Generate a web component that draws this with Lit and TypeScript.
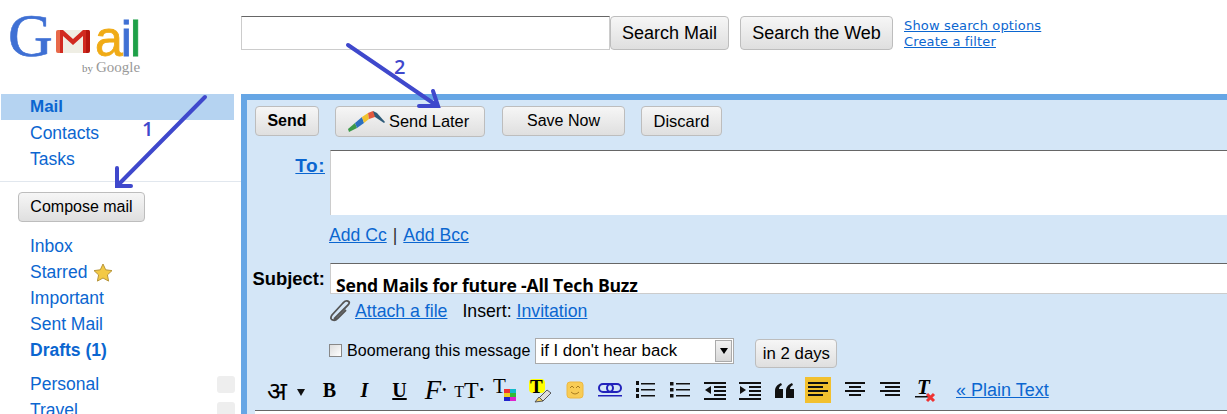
import { LitElement, html, css, svg } from "lit";
import { customElement } from "lit/decorators.js";

@customElement("app-root")
export class AppRoot extends LitElement {
  static styles = css`
    :host { display: block; position: relative; width: 1227px; height: 414px; overflow: hidden; background: #fff; font: 16px "Liberation Sans", Arial, sans-serif; color: #000; }
    a { color: #0b66d0; }
    .top { display: flex; height: 94px; }
    .logo-col { width: 241px; flex: none; padding: 0 0 0 8px; box-sizing: border-box; }
    .logo { display: flex; align-items: baseline; height: 60px; }
    .g { font: 62px/71px "Liberation Serif", serif; color: #3f70d4; width: 47px; -webkit-text-stroke: 0.6px #3f70d4; }
    .envelope { width: 36px; height: 25px; align-self: flex-start; margin: 29px 4px 0 0; flex: none; }
    .ail { font: 50px/57px "Liberation Sans", sans-serif; letter-spacing: -2px; -webkit-text-stroke: 0.8px; }
    .c-a { color: #f0ab16; } .c-i { color: #3f70d4; } .c-l { color: #1ea048; }
    .by { margin: 0 0 0 74px; font: 11px/14px "Liberation Serif", serif; color: #888; display: flex; align-items: baseline; gap: 3px; }
    .by b { font: 15px/14px "Liberation Serif", serif; color: #999; }
    .search { display: flex; align-items: flex-start; padding-top: 16px; }
    .search-input { width: 369px; height: 34px; box-sizing: border-box; border: 1px solid #ccc; border-top-color: #666; background: #fff; }
    .btn { display: flex; align-items: center; justify-content: center; box-sizing: border-box; border: 1px solid #bdbdbd; border-radius: 4px; background: linear-gradient(#f6f6f6, #dfdfdf); font-size: 16px; color: #000; flex: none; white-space: nowrap; }
    .s-mail { width: 119px; height: 34px; font-size: 18px; }
    .s-web { width: 153px; height: 34px; margin-left: 11px; font-size: 18px; }
    .s-links { margin-left: 11px; font: 13px/16px "DejaVu Sans", sans-serif; letter-spacing: 0.15px; display: flex; flex-direction: column; align-items: flex-start; padding-top: 2px; }
    .body { display: flex; }
    .side { width: 241px; flex: none; }
    .nav { display: block; line-height: 26px; height: 26px; padding-left: 30px; color: #0b66d0; font-size: 17.5px; }
    .nav.on { margin: 0 7px 0 1px; padding-left: 29px; background: #b5d3f1; font-weight: bold; font-size: 17px; }
    .nav.bold { font-weight: bold; }
    .rule { height: 1px; background: #e1e7ee; margin-top: 9px; }
    .compose { width: 127px; height: 30px; margin: 10px 0 11px 18px; }
    .gap { height: 8px; }
    .star { width: 20px; height: 20px; margin-left: 6px; vertical-align: -5px; }
    .lab { display: flex; justify-content: space-between; align-items: center; padding-right: 6px; }
    .sw { width: 18px; height: 17px; background: #eee; border-radius: 3px; }
    .main { flex: 1; height: 320px; box-sizing: border-box; border-top: 6px solid #66a6e5; border-left: 6px solid #66a6e5; background: #d4e6f7; overflow: hidden; }
    .actions { display: flex; align-items: flex-start; padding: 6px 0 0 8px; }
    .a-send { width: 64px; height: 30px; font-weight: bold; }
    .a-later { width: 150px; height: 31px; margin-left: 16px; gap: 4px; justify-content: flex-start; padding: 0 0 1px 11px; font-size: 16.4px; }
    .a-later svg { width: 38px; height: 22px; }
    .a-save { width: 123px; height: 30px; margin-left: 17px; }
    .a-disc { width: 81px; height: 30px; margin-left: 16px; font-size: 16.5px; }
    .row { display: flex; gap: 5px; }
    .label { width: 78px; flex: none; text-align: right; font-weight: bold; line-height: 20px; white-space: nowrap; }
    .to-row { margin-top: 13px; }
    .to-row .label { padding-top: 6px; font-size: 19px; letter-spacing: 0.5px; }
    .to-input { flex: 1; height: 65px; box-sizing: border-box; background: #fff; border-top: 1px solid #666; border-left: 1px solid #ccc; }
    .cc { display: flex; gap: 6px; margin: 10px 0 0 82px; line-height: 20px; color: #333; font-size: 17.6px; }
    .sub-row { margin-top: 18px; }
    .sub-row .label { padding-top: 6px; color: #000; font-size: 18.4px; display: flex; justify-content: flex-end; }
    .sub-input { flex: 1; height: 31px; box-sizing: border-box; background: #fff; border-top: 1px solid #666; border-left: 1px solid #ccc; border-bottom: 1px solid #ccc; padding: 6px 0 0 5px; font: bold 17.6px/30px "Open Sans", sans-serif; letter-spacing: -0.2px; overflow: hidden; white-space: nowrap; }
    .attach { display: flex; align-items: center; margin: 7px 0 0 82px; height: 20px; font-size: 17.7px; }
    .clip { width: 22px; height: 22px; margin-right: 4px; flex: none; }
    .ins { margin-left: 15px; margin-right: 5px; }
    .boom { display: flex; align-items: flex-start; margin: 17px 0 0 82px; height: 30px; }
    .check { width: 13px; height: 13px; box-sizing: border-box; border: 1px solid #888; background: linear-gradient(135deg, #ddd, #fff); margin: 6px 5px 0 0; flex: none; }
    .boom-t { line-height: 26px; white-space: nowrap; letter-spacing: 0.09px; }
    .select { width: 199px; height: 26px; box-sizing: border-box; margin-left: 5px; border: 1px solid #aaa; background: #fff; display: flex; align-items: center; justify-content: space-between; padding: 0 0 0 4px; flex: none; font-size: 16.8px; }
    .drop { width: 17px; height: 22px; margin-right: 1px; background: linear-gradient(#f2f2f2, #d8d8d8); border: 1px solid #aaa; box-sizing: border-box; display: flex; align-items: center; justify-content: center; }
    .drop i { border: 4px solid transparent; border-top: 6px solid #000; border-bottom: 0; }
    .days { width: 82px; height: 29px; margin: 1px 0 0 21px; font-size: 16.8px; }
    .tools { display: flex; align-items: center; height: 28px; margin: 8px 0 0 13px; }
    .t { width: 35px; height: 26px; flex: none; display: flex; align-items: center; justify-content: center; font-family: "Liberation Serif", serif; font-size: 20px; line-height: 26px; }
    .t svg { width: 26px; height: 26px; flex: none; }
    .t.h { width: 30px; font: 26px/26px "Noto Sans", "DejaVu Sans", sans-serif; justify-content: center; padding-left: 4px; box-sizing: border-box; }
    .t.d { width: 22px; }
    .t.d i { border: 4px solid transparent; border-top: 7px solid #111; border-bottom: 0; margin-top: 4px; }
    .t.f { font-size: 27px; padding-left: 3px; box-sizing: border-box; }
    .t.tt { font-size: 24px; }
    .t.tt small { font-size: 16px; line-height: 26px; margin-top: 4px; }
    .dot { font-size: 18px; font-weight: bold; }
    .t.on { background: #f2c02f; width: 26px; margin: 0 6px 0 3px; }
    .plain { margin-left: 14px; white-space: nowrap; font-size: 18px; }
    .edit { height: 20px; margin: 6px 0 0 8px; background: #fff; border-top: 1px solid #666; }
    .overlay { position: absolute; inset: 0; width: 1227px; height: 414px; pointer-events: none; }
    .overlay text { font: 600 20px "Open Sans", sans-serif; fill: #3f48cc; }
  `;

  private tool(content: unknown, cls = "") {
    return html`<span class="t ${cls}">${content}</span>`;
  }

  private ic(body: unknown) {
    return html`<svg viewBox="0 0 26 26">${body}</svg>`;
  }

  private lines(rows: [number, number][]) {
    return rows.map(([a, b], i) => svg`<rect x=${a} y=${5 + i * 4} width=${b - a} height="2" fill="#111"/>`);
  }

  render() {
    const envelope = html`<svg class="envelope" viewBox="0 0 36 25">
      <rect x="1" y="1" width="34" height="23" rx="2" fill="#efeee4"/>
      <path d="M5 1h3l10 9L28 1h3v23h-3V7l-10 9L8 7v17H5z" fill="#d12a20"/>
      <path d="M1 3a2 2 0 0 1 2-2h2v23H3a2 2 0 0 1-2-2z" fill="#e8694a"/>
      <path d="M31 1h3a2 2 0 0 1 1 2v19a2 2 0 0 1-2 2h-2z" fill="#b5160f"/>
    </svg>`;
    const star = html`<svg class="star" viewBox="0 0 20 20"><path d="M10 1l2.700 5.800 6.300.8-4.600 4.300 1.200 6.200L10 15l-5.600 3.100 1.200-6.200L1 7.600l6.300-.8z" fill="#f3c945" stroke="#b8963a"/></svg>`;
    return html`
      <div class="top">
        <div class="logo-col">
          <div class="logo"><span class="g">G</span>${envelope}<span class="ail"><span class="c-a">a</span><span class="c-i">i</span><span class="c-l">l</span></span></div>
          <div class="by">by <b>Google</b></div>
        </div>
        <div class="search">
          <div class="search-input"></div>
          <div class="btn s-mail">Search Mail</div>
          <div class="btn s-web">Search the Web</div>
          <div class="s-links"><a href="#">Show search options</a><a href="#">Create a filter</a></div>
        </div>
      </div>
      <div class="body">
        <div class="side">
          <div class="nav on">Mail</div>
          <div class="nav">Contacts</div>
          <div class="nav">Tasks</div>
          <div class="rule"></div>
          <div class="btn compose">Compose mail</div>
          <div class="nav">Inbox</div>
          <div class="nav">Starred${star}</div>
          <div class="nav">Important</div>
          <div class="nav">Sent Mail</div>
          <div class="nav bold">Drafts (1)</div>
          <div class="gap"></div>
          <div class="nav lab">Personal<span class="sw"></span></div>
          <div class="nav lab">Travel<span class="sw"></span></div>
        </div>
        <div class="main">
          <div class="actions">
            <div class="btn a-send">Send</div>
            <div class="btn a-later">
              <svg viewBox="0 0 38 22">
                <path d="M1 19L8 13 10 18 2 22z" fill="#3c9a4a"/>
                <path d="M8 13L15 7 17 13 10 18z" fill="#2c6fc0"/>
                <path d="M15 7L21 3 22 9 17 13z" fill="#f0c22e"/>
                <path d="M21 3L26 1 30 5 28 7 22 9z" fill="#e2583e"/>
                <path d="M26 1L30 3 38 12 37 13 28 7z" fill="#2d5a78"/>
              </svg>
              Send Later
            </div>
            <div class="btn a-save">Save Now</div>
            <div class="btn a-disc">Discard</div>
          </div>
          <div class="row to-row"><div class="label"><a href="#">To:</a></div><div class="to-input"></div></div>
          <div class="cc"><a href="#">Add Cc</a><span>|</span><a href="#">Add Bcc</a></div>
          <div class="row sub-row"><div class="label">Subject:</div><div class="sub-input">Send Mails for future -All Tech Buzz</div></div>
          <div class="attach">
            <svg class="clip" viewBox="0 0 22 22" fill="none" stroke="#555" stroke-width="1.800"><path d="M5 19L17 7C19 5 21 3 20 2 18 0 16 1 14 3L3 15C1 18 2 20 4 20 6 21 8 19 9 18L17 10"/></svg>
            <a href="#">Attach a file</a><span class="ins">Insert:</span><a href="#">Invitation</a>
          </div>
          <div class="boom">
            <span class="check"></span><span class="boom-t">Boomerang this message</span>
            <div class="select">if I don't hear back<span class="drop"><i></i></span></div>
            <div class="btn days">in 2 days</div>
          </div>
          <div class="tools">
            ${this.tool("अ", "h")}
            ${this.tool(html`<i></i>`, "d")}
            ${this.tool(html`<b>B</b>`)}
            ${this.tool(html`<b><i>I</i></b>`)}
            ${this.tool(html`<b><u>U</u></b>`)}
            ${this.tool(html`<i>F</i><span class="dot">·</span>`, "f")}
            ${this.tool(html`<small>T</small>T<span class="dot">·</span>`, "tt")}
            ${this.tool(this.ic(svg`<text x="1" y="16" font-family="Liberation Serif" font-size="21">T</text>
              <rect x="12" y="12" width="6" height="4" fill="#e33"/><rect x="18" y="12" width="6" height="4" fill="#1bc"/>
              <rect x="12" y="16" width="6" height="4" fill="#ec2"/><rect x="18" y="16" width="6" height="4" fill="#3b3"/>
              <rect x="12" y="20" width="6" height="4" fill="#22c"/><rect x="18" y="20" width="6" height="4" fill="#d2c"/>`))}
            ${this.tool(this.ic(svg`<rect x="2" y="2" width="16" height="14" rx="4" fill="#ff0"/>
              <text x="3" y="16" font-family="Liberation Serif" font-weight="bold" font-size="19">T</text>
              <path d="M12 21l8-8 4 3-8 8z" fill="#ddd" stroke="#555"/><path d="M8 25l4-5 4 4z" fill="#f2d060" stroke="#555"/>`))}
            ${this.tool(this.ic(svg`<rect x="5" y="5" width="16" height="16" rx="3" fill="#f8cc55" stroke="#eeb840"/>
              <path d="M8 11l2-2 2 2M14 11l2-2 2 2M9 15q4 4 8 0" fill="none" stroke="#a87c20"/>`))}
            ${this.tool(this.ic(svg`<g fill="none" stroke="#2222bb" stroke-width="2"><rect x="2" y="7" width="14" height="8" rx="4"/><rect x="10" y="7" width="14" height="8" rx="4"/></g><rect x="1" y="18" width="24" height="1.500" fill="#2222bb"/>`))}
            ${this.tool(this.ic(svg`<rect x="9" y="6" width="14" height="1.500" fill="#111"/><rect x="9" y="12" width="14" height="1.500" fill="#111"/><rect x="9" y="18" width="14" height="1.500" fill="#111"/>
              <rect x="4" y="4" width="3" height="4" fill="#111"/><rect x="4" y="11" width="3" height="4" fill="#111"/><rect x="4" y="17" width="3" height="4" fill="#111"/>`))}
            ${this.tool(this.ic(svg`<rect x="9" y="6" width="14" height="1.500" fill="#111"/><rect x="9" y="12" width="14" height="1.500" fill="#111"/><rect x="9" y="18" width="14" height="1.500" fill="#111"/>
              <rect x="3" y="5" width="3.500" height="3.500" fill="#111"/><rect x="3" y="11" width="3.500" height="3.500" fill="#111"/><rect x="3" y="17" width="3.500" height="3.500" fill="#111"/>`))}
            ${this.tool(this.ic(svg`${this.lines([[2, 24], [12, 24], [12, 24], [12, 24], [2, 24]])}<path d="M9 9v8l-6-4z" fill="#111"/>`))}
            ${this.tool(this.ic(svg`${this.lines([[2, 24], [12, 24], [12, 24], [12, 24], [2, 24]])}<path d="M3 9v8l6-4z" fill="#111"/>`))}
            ${this.tool(this.ic(svg`<path d="M3 21v-7c0-4 2-6 6-8l1 2c-2 1-3 2-3 4h4v9zM14 21v-7c0-4 2-6 6-8l1 2c-2 1-3 2-3 4h4v9z" fill="#111"/>`))}
            ${this.tool(this.ic(svg`${this.lines([[3, 23], [3, 18], [3, 23], [3, 18]])}`), "on")}
            ${this.tool(this.ic(svg`${this.lines([[3, 23], [7, 19], [3, 23], [7, 19]])}`))}
            ${this.tool(this.ic(svg`${this.lines([[3, 23], [8, 23], [3, 23], [8, 23]])}`))}
            ${this.tool(this.ic(svg`<text x="5" y="17" font-family="Liberation Serif" font-style="italic" font-weight="bold" font-size="21">T</text>
              <rect x="3" y="19" width="14" height="1.500" fill="#111"/><path d="M15 17l7 7M22 17l-7 7" stroke="#e33" stroke-width="3"/>`))}
            <a class="plain" href="#">« Plain Text</a>
          </div>
          <div class="edit"></div>
        </div>
      </div>
      <svg class="overlay" viewBox="0 0 1227 414" fill="none" stroke="#3f48cc" stroke-width="4" stroke-linecap="round">
        <path d="M205 97L119 184M117 168V186H131"/>
        <path d="M348 45L436 105M419 106H438L433 91"/>
        <text x="142" y="136" stroke="none">1</text>
        <text x="394" y="74" stroke="none">2</text>
      </svg>
    `;
  }
}
